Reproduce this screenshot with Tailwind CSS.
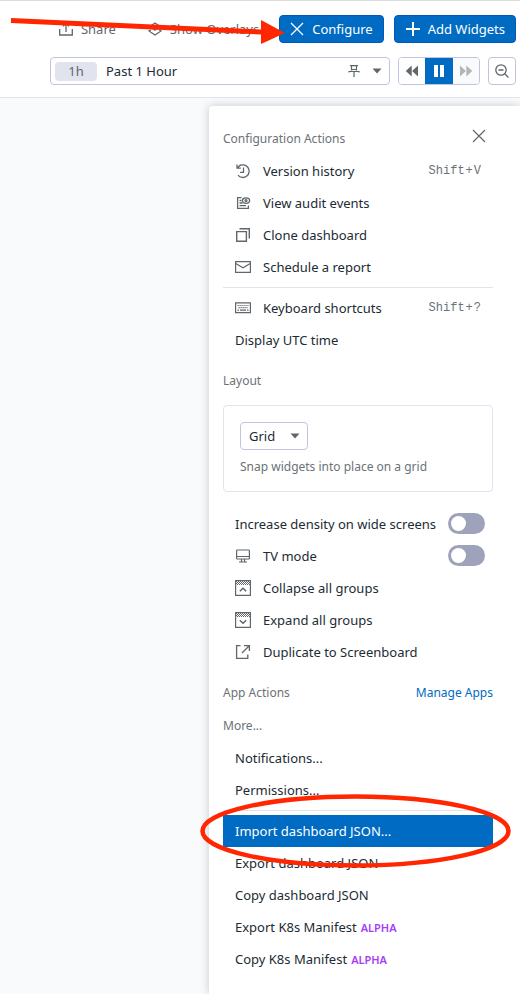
<!DOCTYPE html>
<html lang="en">
<head>
<meta charset="utf-8">
<meta name="viewport" content="width=device-width, initial-scale=1">
<title>Dashboard configuration</title>
<script src="https://cdn.jsdelivr.net/npm/@tailwindcss/browser@4"></script>
</head>
<body class="flex min-h-screen flex-col overflow-x-hidden bg-[#f9fafb] font-['Noto_Sans','Open_Sans',sans-serif] text-[13px] leading-5 text-[#1c2b34]">

<header class="flex flex-col gap-3.5 border-t border-b border-t-[#dcdcdc] border-b-[#e3e5ee] bg-white pt-3.5 pr-1 pb-3">
  <div class="flex items-center justify-end">
    <button type="button" class="mr-8 flex items-center gap-2 text-[#5f676c]">
      <svg class="size-3.5" viewBox="0 0 14 14" fill="none" stroke="currentColor" stroke-width="1.3" aria-hidden="true"><path d="M.7 7v6h12.6V7M7 10V1.5M4 4.2l3-3 3 3"/></svg>
      Share
    </button>
    <button type="button" class="mr-5 flex items-center gap-2 text-[#5f676c]">
      <svg class="size-3.5" viewBox="0 0 14 14" fill="none" stroke="currentColor" stroke-width="1.3" aria-hidden="true"><path d="M3 6.300L1 5l6-4 6 4-2 1.300M4.500 6.500L7 8.200l2.500-1.700M3 7.700L1 9l6 4 6-4-2-1.300"/></svg>
      Show Overlays
    </button>
    <div class="relative mr-2.5">
      <button type="button" class="flex h-7 items-center gap-2 rounded border border-[#0059b8] bg-[#006bc2] px-2.5 text-white">
        <svg class="size-3.5" viewBox="0 0 14 14" fill="none" stroke="currentColor" stroke-width="1.3" aria-hidden="true"><path d="M1 1l12 12M13 1L1 13"/></svg>
        Configure
      </button>
      <svg class="pointer-events-none absolute top-0 -left-[269px] z-10 h-8 w-[276px]" viewBox="0 0 276 32" aria-hidden="true"><path d="M1 5.500L252 17" stroke="#ff2600" stroke-width="5"/><path d="M251 5v24l24-11z" fill="#ff2600"/></svg>
    </div>
    <button type="button" class="flex h-7 items-center gap-2 rounded border border-[#0059b8] bg-[#006bc2] pr-2.5 pl-[11px] text-white">
      <svg class="size-3.5" viewBox="0 0 14 14" fill="none" stroke="currentColor" stroke-width="2" aria-hidden="true"><path d="M7 0v14M0 7h14"/></svg>
      Add Widgets
    </button>
  </div>
  <div class="flex gap-2 pl-[50px]">
    <button type="button" class="flex h-7 flex-1 items-center rounded border border-[#c0c5dd] bg-white pr-[7px] pl-1 text-left">
      <span class="mr-[9px] flex h-[19px] w-[42px] items-center justify-center rounded bg-[#e1e4ee] text-[#5f676c]">1h</span>
      <span class="flex-1">Past 1 Hour</span>
      <svg class="mr-3 h-3 w-3" viewBox="0 0 12 12" fill="none" stroke="#5f676c" stroke-width="1.2" aria-hidden="true"><path d="M2 .6h8M3.500 .6v5M8.500 .6v5M3.500 4.500h5M1 7.500V6.500h10v1M6 7v5"/></svg>
      <svg class="h-1.5 w-2.5" viewBox="0 0 10 6" fill="#5f676c" aria-hidden="true"><path d="M.5 .5h9L5 5.500z"/></svg>
    </button>
    <div class="flex h-7 w-[82px] overflow-hidden rounded border border-[#c0c5dd]">
      <button type="button" aria-label="Step back" class="flex flex-1 items-center justify-center bg-white text-[#5f676c]">
        <svg class="h-3 w-3.5" viewBox="0 0 14 12" fill="currentColor" aria-hidden="true"><path d="M6.700 .5v11L.8 6zM13 .5v11L7.100 6z"/></svg>
      </button>
      <button type="button" aria-label="Pause" class="-my-px flex w-7 items-center justify-center bg-[#006bc2] text-white">
        <svg class="h-3 w-3" viewBox="0 0 12 12" fill="currentColor" aria-hidden="true"><path d="M1 0h4v12H1zM7 0h4v12H7z"/></svg>
      </button>
      <button type="button" aria-label="Step forward" disabled class="flex flex-1 items-center justify-center bg-[#f9fafb] text-[#b0b5b8]">
        <svg class="h-3 w-3.5" viewBox="0 0 14 12" fill="currentColor" aria-hidden="true"><path d="M1 .5v11L6.900 6zM7.300 .5v11L13.200 6z"/></svg>
      </button>
    </div>
    <button type="button" aria-label="Zoom out" class="flex h-7 w-7 items-center justify-center rounded border border-[#c0c5dd] bg-white text-[#5f676c]">
      <svg class="size-3.5" viewBox="0 0 14 14" fill="none" stroke="currentColor" stroke-width="1.3" aria-hidden="true"><circle cx="6" cy="6" r="5.200"/><path d="M3.500 6h5M10 10l3.500 3.500"/></svg>
    </button>
  </div>
</header>

<main class="flex flex-1 flex-col pt-2">
  <section aria-label="Configuration" class="ml-auto w-[311px] max-w-full flex-1 rounded-tl bg-white pt-5 pr-[27px] pb-4 pl-3.5 shadow-[0_0_10px_rgba(0,0,0,0.2)]">
    <div class="flex h-[29px] items-start justify-between">
      <h2 class="pt-[3px] text-xs leading-5 text-[#6b7277]">Configuration Actions</h2>
      <button type="button" aria-label="Close" class="mt-[3px] mr-[7px] text-[#5f676c]">
        <svg class="size-3.5" viewBox="0 0 14 14" fill="none" stroke="currentColor" stroke-width="1.2" aria-hidden="true"><path d="M1 1l12 12M13 1L1 13"/></svg>
      </button>
    </div>

    <ul>
      <li><button type="button" class="flex h-8 w-full items-center px-3 text-left">
        <svg class="mr-3 size-4 text-[#5f676c]" viewBox="0 0 16 16" fill="none" stroke="currentColor" stroke-width="1.3" aria-hidden="true"><path d="M2 1.500v3.700h3.800M2.300 5L4 3.200A6.300 6.300 0 1 1 3 12.200M4 3.200A6.300 6.300 0 0 1 6 1.900M8.500 4.500v4.800H5"/></svg>
        <span class="flex-1">Version history</span><kbd class="font-['Liberation_Mono',monospace] text-xs text-[#6b7277]">Shift<span class="mx-px">+</span>V</kbd></button></li>
      <li><button type="button" class="flex h-8 w-full items-center px-3 text-left">
        <svg class="mr-3 size-4 text-[#5f676c]" viewBox="0 0 16 16" fill="none" stroke="currentColor" stroke-width="1.3" aria-hidden="true"><path d="M6.500 2.600H2.600v10.800h10.800v-3M4.500 5.500h2M4.500 8h3M4.500 10.700h6.500"/><ellipse cx="11" cy="5.600" rx="3.600" ry="2.800"/><circle cx="11" cy="5.600" r="1"/></svg>
        View audit events</button></li>
      <li><button type="button" class="flex h-8 w-full items-center px-3 text-left">
        <svg class="mr-3 size-4 text-[#5f676c]" viewBox="0 0 16 16" fill="none" stroke="currentColor" stroke-width="1.4" aria-hidden="true"><path d="M1.700 4.600h9.700v9.700H1.700zM4.500 1.700h9.800v9.800"/></svg>
        Clone dashboard</button></li>
      <li><button type="button" class="flex h-8 w-full items-center px-3 text-left">
        <svg class="mr-3 size-4 text-[#5f676c]" viewBox="0 0 16 16" fill="none" stroke="currentColor" stroke-width="1.2" aria-hidden="true"><path d="M.6 2.600h14.800v10.800H.6zM.8 4.500L8 8.700l7.200-4.200"/></svg>
        Schedule a report</button></li>
    </ul>
    <hr class="my-1 border-[#e1e4ee]">
    <ul>
      <li><button type="button" class="flex h-8 w-full items-center px-3 text-left">
        <svg class="mr-3 size-4 text-[#5f676c]" viewBox="0 0 16 16" fill="none" stroke="currentColor" stroke-width="1.200" aria-hidden="true"><path d="M.6 2.900h14.800v9.800H.6z"/><path d="M2.500 5.500h11M3.500 7.700h9" stroke-dasharray="1.200 .8"/><path d="M2.500 10.200h1.500M5 10.200h6M12 10.200h1.500"/></svg>
        <span class="flex-1">Keyboard shortcuts</span><kbd class="font-['Liberation_Mono',monospace] text-xs text-[#6b7277]">Shift<span class="mx-px">+</span>?</kbd></button></li>
      <li><button type="button" class="flex h-8 w-full items-center px-3 text-left">Display UTC time</button></li>
    </ul>

    <h2 class="mt-[15px] text-xs leading-5 text-[#6b7277]">Layout</h2>
    <div class="mt-3.5 rounded border border-[#e1e4ee] p-4 pb-3.5">
      <div class="relative w-[68px]">
        <select aria-label="Layout" aria-describedby="layout-help" class="block h-7 w-full appearance-none rounded border border-[#c0c5dd] bg-white pl-2 text-[13px] text-[#1c2b34]"><option>Grid</option><option>Free</option></select>
        <svg class="pointer-events-none absolute top-[11px] right-2 h-1.5 w-2.5" viewBox="0 0 10 6" fill="#5f676c" aria-hidden="true"><path d="M.5 .5h9L5 5.500z"/></svg>
      </div>
      <p id="layout-help" class="mt-[7px] text-xs leading-5 text-[#6b7277]">Snap widgets into place on a grid</p>
    </div>

    <ul class="mt-4">
      <li><label class="flex h-8 items-center pr-2 pl-3"><span class="flex-1 whitespace-nowrap">Increase density on wide screens</span>
        <input type="checkbox" role="switch" class="mb-px flex h-[21px] w-[37px] appearance-none items-center rounded-full bg-[#9ea3bb] pl-[3px] before:size-[15px] before:rounded-full before:bg-white checked:bg-[#006bc2] checked:pl-[19px]"></label></li>
      <li><label class="flex h-8 items-center pr-2 pl-3">
        <svg class="mr-3 size-4 text-[#5f676c]" viewBox="0 0 16 16" fill="none" stroke="currentColor" stroke-width="1.200" aria-hidden="true"><path d="M2.300 2h11.400q.7 0 .7.7v7.600q0 .7-.7.700H2.300q-.7 0-.7-.7V2.700q0-.7.7-.7zM1.600 8.500h12.800M6.500 11v3M9.500 11v3M4 14h8"/></svg>
        <span class="flex-1">TV mode</span>
        <input type="checkbox" role="switch" class="mb-px flex h-[21px] w-[37px] appearance-none items-center rounded-full bg-[#9ea3bb] pl-[3px] before:size-[15px] before:rounded-full before:bg-white checked:bg-[#006bc2] checked:pl-[19px]"></label></li>
      <li><button type="button" class="flex h-8 w-full items-center px-3 text-left">
        <svg class="mr-3 size-4 text-[#5f676c]" viewBox="0 0 16 16" fill="none" stroke="currentColor" stroke-width="1.200" aria-hidden="true"><path d="M1 1.500h14M1 3.500h14M2 2.500h13M2 4.500h13" stroke-width="1" stroke-dasharray="1 1"/><path d="M.6.600h14.800v14.800H.6z"/><path d="M4.800 11.300L8 8.300l3.200 3" stroke-width="1.500"/></svg>
        Collapse all groups</button></li>
      <li><button type="button" class="flex h-8 w-full items-center px-3 text-left">
        <svg class="mr-3 size-4 text-[#5f676c]" viewBox="0 0 16 16" fill="none" stroke="currentColor" stroke-width="1.200" aria-hidden="true"><path d="M1 1.500h14M1 3.500h14M2 2.500h13M2 4.500h13" stroke-width="1" stroke-dasharray="1 1"/><path d="M.6.600h14.800v14.800H.6z"/><path d="M4.800 8.300L8 11.300l3.200-3" stroke-width="1.500"/></svg>
        Expand all groups</button></li>
      <li><button type="button" class="flex h-8 w-full items-center px-3 text-left">
        <svg class="mr-3 size-4 text-[#5f676c]" viewBox="0 0 16 16" fill="none" stroke="currentColor" stroke-width="1.300" aria-hidden="true"><path d="M5.500 1.600H1.600v12.800h11.200v-4M7 9l7-7M9 1.600h5.400V7"/></svg>
        Duplicate to Screenboard</button></li>
    </ul>

    <div class="mt-[15px] flex justify-between text-xs leading-5">
      <h2 class="text-[#6b7277]">App Actions</h2>
      <a href="#" class="text-[#006bc2]">Manage Apps</a>
    </div>
    <h2 class="mt-[13px] mb-1.5 text-xs leading-5 text-[#6b7277]">More...</h2>
    <ul>
      <li><button type="button" class="flex h-8 w-full items-center px-3 text-left">Notifications...</button></li>
      <li><button type="button" class="flex h-8 w-full items-center px-3 text-left">Permissions...</button></li>
    </ul>
    <hr class="my-1 border-[#e1e4ee]">
    <ul>
      <li class="relative"><button type="button" class="flex h-8 w-full items-center bg-[#006bc2] px-3 text-left text-white">Import dashboard JSON...</button>
        <svg class="pointer-events-none absolute -top-[22px] -left-[23px] z-10 h-[76px] w-[312px]" viewBox="0 0 312 76" fill="none" aria-hidden="true"><ellipse cx="155.500" cy="38" rx="153" ry="34.500" stroke="#ff2600" stroke-width="4.500"/></svg></li>
      <li><button type="button" class="flex h-8 w-full items-center px-3 text-left">Export dashboard JSON</button></li>
      <li><button type="button" class="flex h-8 w-full items-center px-3 text-left">Copy dashboard JSON</button></li>
      <li><button type="button" class="flex h-8 w-full items-center gap-1 px-3 text-left">Export K8s Manifest <span class="pt-px text-[11px] font-semibold text-[#a63ef5]">ALPHA</span></button></li>
      <li><button type="button" class="flex h-8 w-full items-center gap-1 px-3 text-left">Copy K8s Manifest <span class="pt-px text-[11px] font-semibold text-[#a63ef5]">ALPHA</span></button></li>
    </ul>
  </section>
</main>
</body>
</html>
